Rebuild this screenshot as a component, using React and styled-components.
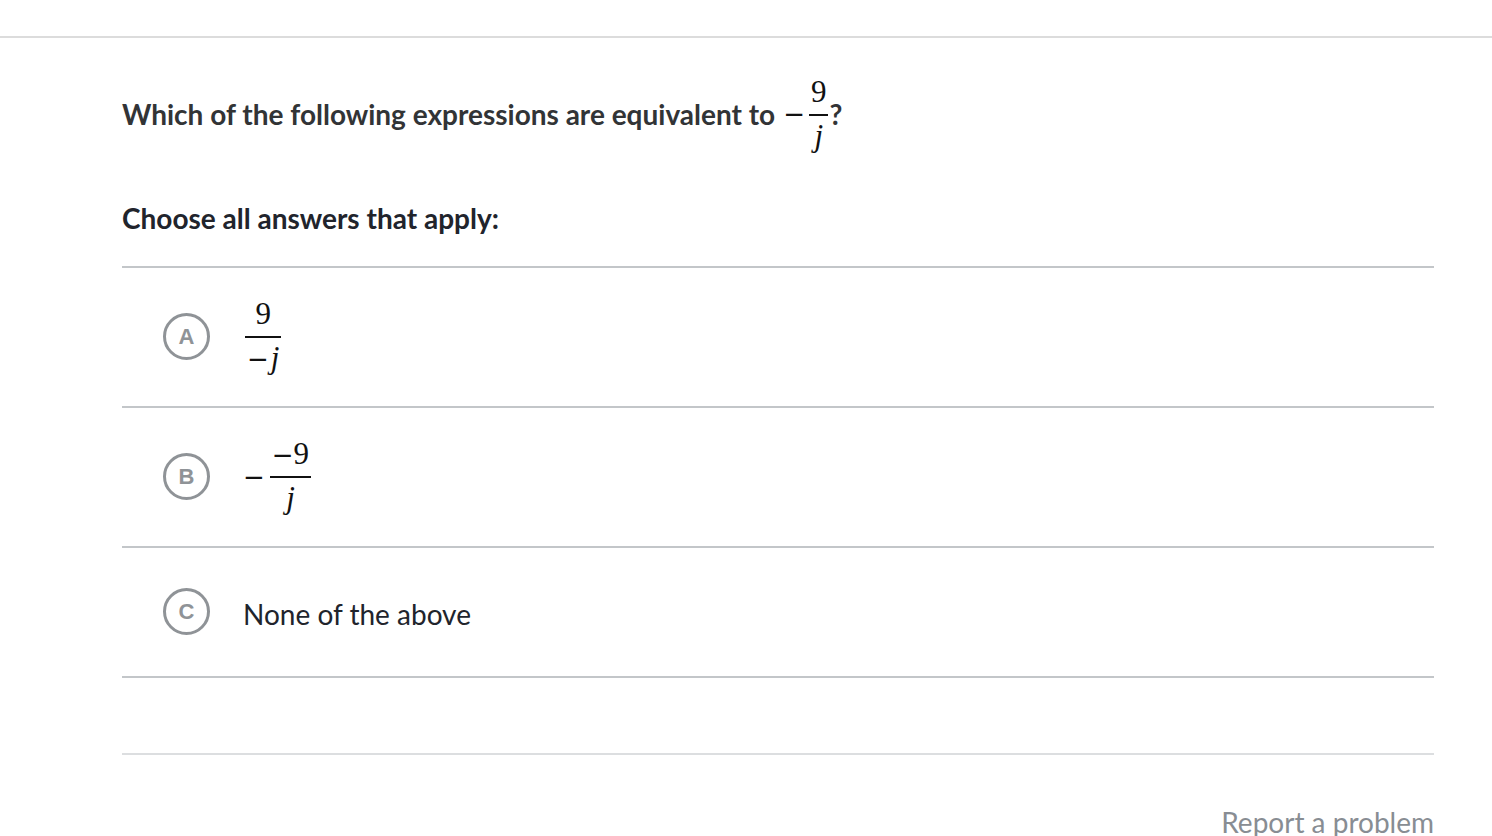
import React from 'react';
import styled, { createGlobalStyle } from 'styled-components';

const GlobalStyle = createGlobalStyle`
  html, body {
    margin: 0;
    padding: 0;
    background: #ffffff;
  }
  body {
    font-family: Lato, 'Liberation Sans', sans-serif;
    color: #21242c;
  }
`;

const TopBar = styled.div`
  height: 36px;
  border-bottom: 2px solid #dcdcdc;
`;

const Content = styled.div`
  padding: 0 58px 0 122px;
`;

const Question = styled.div`
  display: flex;
  align-items: center;
  margin-top: 38px;
  font-size: 28px;
  font-weight: 700;
  color: #323436;
  line-height: 32px;
`;

const Math = styled.span`
  display: inline-flex;
  align-items: center;
  font-family: 'Liberation Serif', 'DejaVu Serif', serif;
  font-size: 31px;
  font-weight: 400;
  color: #111;
  margin-left: ${(p) => p.$ml || 0}px;
`;

const Minus = styled.span`
  font-family: 'DejaVu Sans', sans-serif;
  font-size: 26px;
  line-height: 1;
  margin-right: ${(p) => p.$mr || 0}px;
`;

const Frac = styled.span`
  display: inline-flex;
  flex-direction: column;
  align-items: center;
  margin: 0 ${(p) => p.$pad || 2}px;
`;

const Num = styled.span`
  display: flex;
  align-items: baseline;
  line-height: 31px;
  padding: 0 2px 7px;
`;

const Bar = styled.span`
  align-self: stretch;
  height: 1.6px;
  background: #111;
`;

const Den = styled.span`
  display: flex;
  align-items: baseline;
  line-height: 31px;
  padding: 4px 2px 2px;
`;

const Var = styled.i`
  font-style: italic;
`;

const Instructions = styled.div`
  margin-top: 49px;
  font-size: 28px;
  font-weight: 700;
  line-height: 32px;
  color: #21242c;
`;

const ChoiceList = styled.div`
  margin-top: 32px;
  border-top: 2px solid #c3c6c9;
`;

const Choice = styled.div`
  display: flex;
  align-items: center;
  gap: 33px;
  height: ${(p) => p.$h}px;
  padding-left: 41px;
  border-bottom: 2px solid ${(p) => p.$light ? '#dcdee0' : '#c3c6c9'};
`;

const Letter = styled.span`
  box-sizing: border-box;
  width: 47px;
  height: 47px;
  flex: none;
  border-radius: 50%;
  border: 3px solid #8f9397;
  display: flex;
  align-items: center;
  justify-content: center;
  font-family: 'Liberation Sans', Arial, sans-serif;
  font-weight: 700;
  font-size: 22px;
  color: #8f9397;
`;

const ChoiceText = styled.span`
  font-size: 28px;
  color: #21242c;
  margin-top: 4px;
`;

const Footer = styled.div`
  display: flex;
  justify-content: flex-end;
  margin-top: 52px;
`;

const ReportLink = styled.span`
  font-size: 28px;
  line-height: 30px;
  color: #888d93;
`;

const choices = [
  {
    letter: 'A',
    h: 138,
    body: (
      <Math>
        <Frac>
          <Num>9</Num>
          <Bar />
          <Den><Minus $mr={2}>−</Minus><Var>j</Var></Den>
        </Frac>
      </Math>
    ),
  },
  {
    letter: 'B',
    h: 138,
    body: (
      <Math>
        <Minus $mr={4}>−</Minus>
        <Frac $pad={1}>
          <Num><Minus>−</Minus>9</Num>
          <Bar />
          <Den><Var>j</Var></Den>
        </Frac>
      </Math>
    ),
  },
  {
    letter: 'C',
    h: 128,
    body: <ChoiceText>None of the above</ChoiceText>,
  },
];

const App = () => {
  return (
    <>
      <GlobalStyle />
      <TopBar />
      <Content>
        <Question>
          Which of the following expressions are equivalent to
          <Math $ml={8}>
            <Minus $mr={3}>−</Minus>
            <Frac $pad={1}>
              <Num>9</Num>
              <Bar />
              <Den><Var>j</Var></Den>
            </Frac>
          </Math>
          ?
        </Question>
        <Instructions>Choose all answers that apply:</Instructions>
        <ChoiceList>
          {choices.map((c) => (
            <Choice key={c.letter} $h={c.h}>
              <Letter>{c.letter}</Letter>
              {c.body}
            </Choice>
          ))}
          <Choice $h={75} $light />
        </ChoiceList>
        <Footer>
          <ReportLink>Report a problem</ReportLink>
        </Footer>
      </Content>
    </>
  );
};

export default App;
